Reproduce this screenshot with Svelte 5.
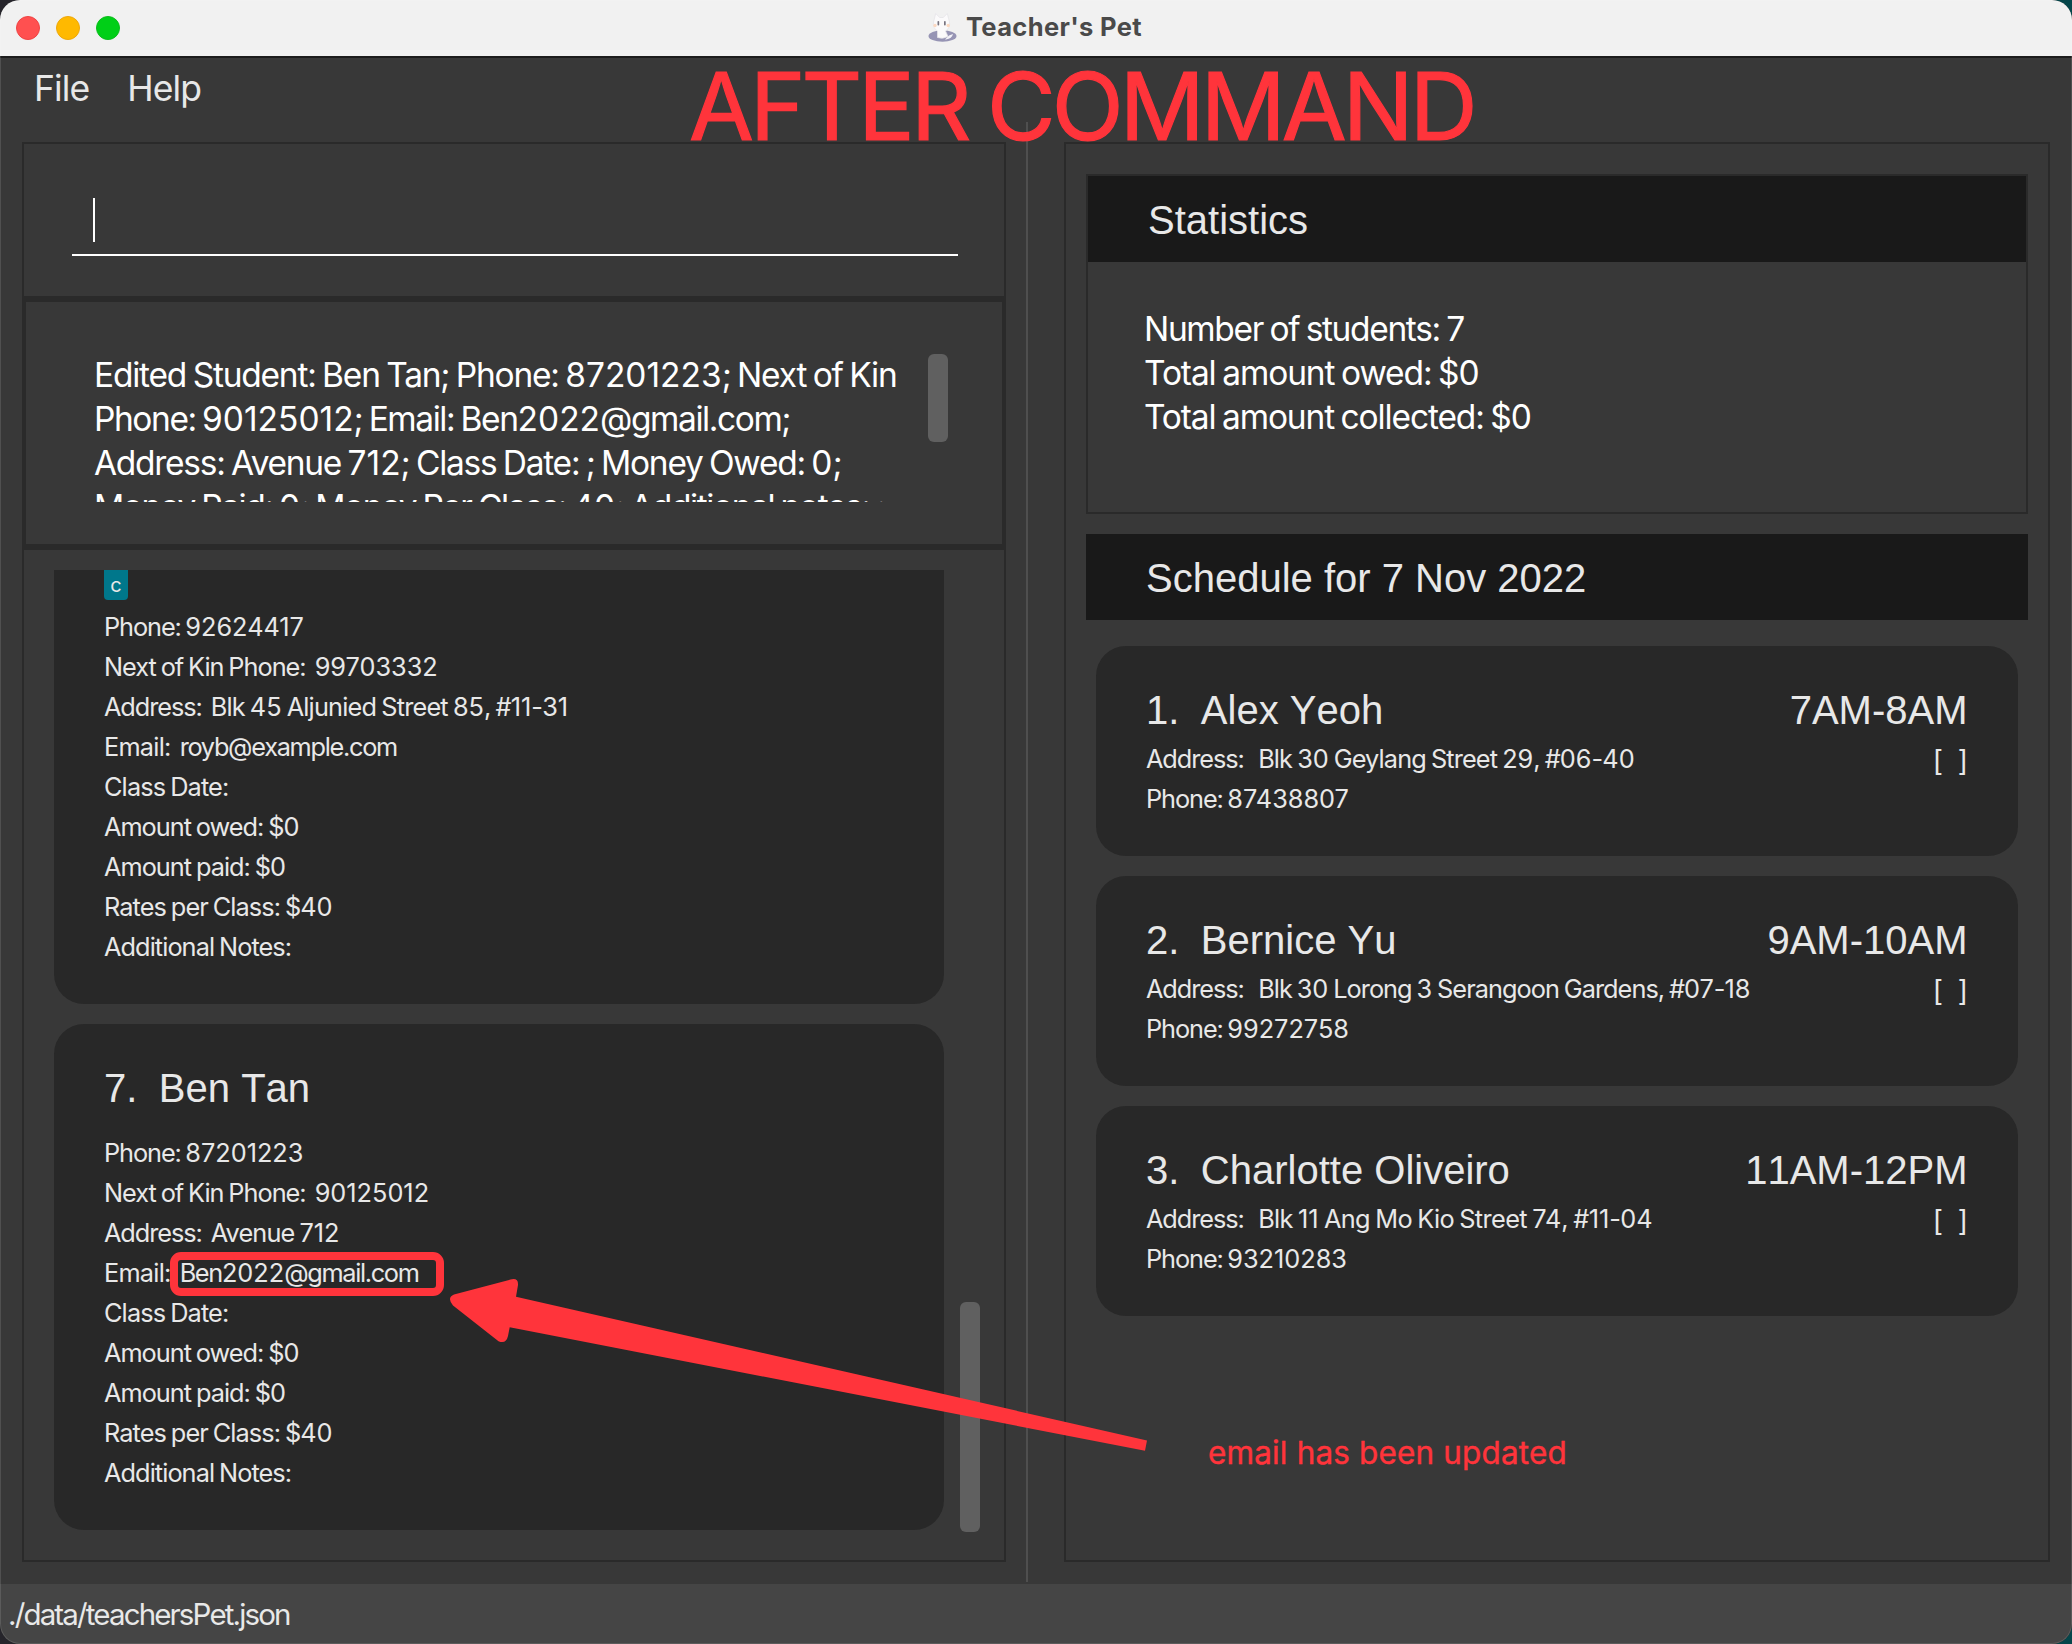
<script>
  const resultLines = [
    { text: 'Edited Student: Ben Tan; Phone: 87201223; Next of Kin', track: -1.22 },
    { text: 'Phone: 90125012; Email: Ben2022@gmail.com;', track: -1.42 },
    { text: 'Address: Avenue 712; Class Date: ; Money Owed: 0;', track: -1.27 },
    { text: 'Money Paid: 0; Money Per Class: 40; Additional notes: ;', track: -1.4 },
  ];

  const stats = [
    { text: 'Number of students: 7', track: -1.34 },
    { text: 'Total amount owed: $0', track: -1.11 },
    { text: 'Total amount collected: $0', track: -1.14 },
  ];

  const students = [
    {
      tag: 'c',
      clipped: true,
      phone: { text: '92624417', track: 0 },
      kin: { text: '99703332', track: 0 },
      address: { text: 'Blk 45 Aljunied Street 85, #11-31', track: -0.8 },
      email: { text: 'royb@example.com', track: -1.28 },
    },
    {
      index: 7,
      name: 'Ben Tan',
      phone: { text: '87201223', track: 0 },
      kin: { text: '90125012', track: 0 },
      address: { text: 'Avenue 712', track: -0.85 },
      email: { text: 'Ben2022@gmail.com', track: -1.33 },
    },
  ];

  const lessons = [
    { index: 1, name: 'Alex Yeoh', time: '7AM-8AM', phone: { text: '87438807', track: 0 }, address: { text: 'Blk 30 Geylang Street 29, #06-40', track: -0.86 } },
    { index: 2, name: 'Bernice Yu', time: '9AM-10AM', phone: { text: '99272758', track: 0 }, address: { text: 'Blk 30 Lorong 3 Serangoon Gardens, #07-18', track: -0.96 } },
    { index: 3, name: 'Charlotte Oliveiro', time: '11AM-12PM', phone: { text: '93210283', track: 0 }, address: { text: 'Blk 11 Ang Mo Kio Street 74, #11-04', track: -0.62 } },
  ];

  // Letters are tracked tightly while runs of digits keep their natural width.
  const runs = (text) => text.split(/(\d+)/).filter(Boolean);
  const isDigits = (run) => /^\d/.test(run);
</script>

{#snippet tracked(text, track)}
  <span class="tracked" style:letter-spacing="{track}px">{#each runs(text) as run}<span class:digits={isDigits(run)}>{run}</span>{/each}</span>
{/snippet}

{#snippet field(label, value, track = -1.08)}
  <div class="row">
    {@render tracked(label, track)}
    {#if value}{@render tracked(value.text, value.track)}{/if}
  </div>
{/snippet}

<div class="window">
  <header class="titlebar">
    <div class="lights">
      <i class="close"></i><i class="minimise"></i><i class="zoom"></i>
    </div>
    <div class="title">
      <svg width="30" height="30" viewBox="0 0 30 30" aria-hidden="true">
        <ellipse cx="14.500" cy="23" rx="14" ry="5.800" fill="#9694b4" />
        <path d="M18 26.500q6-1 7-5.500l-4 1.500-4 4z" fill="#f4f3f8" />
        <path d="M9.500 24.500V18q-5-3-4-9l2.200-8.500 4 4h3.600l4-4L21.500 9q1 6-4 9l2.500 5.500q-5.500 3-10.500 1z" fill="#fbfafb" stroke="#e6e4e8" stroke-width=".8" />
        <rect x="9.500" y="8" width="1.700" height="4.500" rx=".8" fill="#77737f" />
        <rect x="16" y="8" width="1.700" height="4.500" rx=".8" fill="#77737f" />
        <circle cx="7" cy="12.500" r="1.700" fill="#fbd9c2" />
        <circle cx="20.200" cy="12.500" r="1.700" fill="#fbd9c2" />
      </svg>
      <span>Teacher's Pet</span>
    </div>
  </header>

  <nav class="menu"><span>File</span><span>Help</span></nav>

  <main>
    <section class="panel left">
      <div class="command"><div class="input"><i class="caret"></i></div></div>

      <div class="result">
        <div class="result-text">
          {#each resultLines as line}
            <div>{@render tracked(line.text, line.track)}</div>
          {/each}
        </div>
        <i class="thumb short"></i>
      </div>

      <div class="list">
        <div class="cards">
          {#each students as s}
            <article class="card" class:clipped={s.clipped}>
              {#if s.tag}<span class="tag">{s.tag}</span>{/if}
              {#if s.name}<h3><span>{s.index}.</span><span>{s.name}</span></h3>{/if}
              <div class="details">
                <div class="tight">{@render field('Phone:', s.phone)}</div>
                {@render field('Next of Kin Phone:', s.kin, -1)}
                {@render field('Address:', s.address)}
                {@render field('Email:', s.email, -0.75)}
                {@render field('Class Date:', null, -0.86)}
                {@render field('Amount owed: $0', null, -1)}
                {@render field('Amount paid: $0', null, -0.98)}
                {@render field('Rates per Class: $40', null, -0.92)}
                {@render field('Additional Notes:', null, -0.93)}
              </div>
            </article>
          {/each}
        </div>
        <i class="thumb long"></i>
      </div>
    </section>

    <div class="splitter"></div>

    <section class="panel right">
      <div class="stats">
        <h2>Statistics</h2>
        <div class="stats-text">
          {#each stats as line}
            <div>{@render tracked(line.text, line.track)}</div>
          {/each}
        </div>
      </div>

      <h2>Schedule for 7 Nov 2022</h2>

      <div class="lessons">
        {#each lessons as l}
          <article class="card lesson">
            <div class="head">
              <h3><span>{l.index}.</span><span>{l.name}</span></h3>
              <span class="time">{l.time}</span>
            </div>
            <div class="body">
              <div class="details">
                <div class="wide">{@render field('Address:', l.address)}</div>
                <div class="tight">{@render field('Phone:', l.phone)}</div>
              </div>
              <span class="check">[ ]</span>
            </div>
          </article>
        {/each}
      </div>
    </section>
  </main>

  <footer>./data/teachersPet.json</footer>

  <svg class="marks" viewBox="0 0 2072 1644" aria-hidden="true">
    <rect x="174" y="1256" width="266" height="36" rx="7" fill="none" stroke="#ff343b" stroke-width="8" />
    <path
      d="M454 1294.500L510.500 1279.500Q518.500 1277.500 518 1285L516 1296.700L1147 1440.500L1145 1450.800L509.700 1327.300L508 1336Q506 1344.500 498.500 1341.200L453 1305.500Q446.500 1297.500 454 1294.500Z"
      fill="#ff343b"
    />
  </svg>
  <div class="headline">AFTER COMMAND</div>
  <div class="caption">email has been updated</div>
</div>

<style>
  :global(body) {
    margin: 0;
    background: linear-gradient(90deg, #26252b 50%, #05464b 50%);
  }
  .window {
    position: relative;
    display: flex;
    flex-direction: column;
    width: 2072px;
    height: 1644px;
    overflow: hidden;
    border-radius: 20px;
    background: #383838;
    color: #e8e8e8;
    font-family: Inter, sans-serif;
  }
  .window::after {
    content: '';
    position: absolute;
    inset: 0;
    border-radius: 20px;
    box-shadow: inset 0 0 0 1px rgba(255, 255, 255, 0.12);
    pointer-events: none;
  }
  h2, h3 {
    margin: 0;
    font: 400 40px/44px 'Liberation Sans', Arial, sans-serif;
    white-space: nowrap;
  }

  .titlebar {
    box-sizing: border-box;
    display: grid;
    grid-template-columns: 1fr auto 1fr;
    align-items: center;
    height: 58px;
    flex: none;
    border-bottom: 2px solid #1c1c1c;
    background: #f1f1f1;
    color: #4a4a4a;
  }
  .lights {
    display: flex;
    gap: 16px;
    padding-left: 16px;
  }
  .lights i {
    box-sizing: border-box;
    width: 24px;
    height: 24px;
    border-radius: 50%;
  }
  .close { background: #ff5050; border: 1px solid #ee4444; }
  .minimise { background: #ffb900; border: 1px solid #eda70b; }
  .zoom { background: #00cf17; border: 1px solid #0bbd1c; }
  .title {
    display: flex;
    align-items: center;
    gap: 8px;
    font: 700 25.5px/32px Inter, sans-serif;
    letter-spacing: 0.36px;
  }
  .title svg { margin-left: -2px; margin-top: -1px; }
  .title span { margin-top: -3px; }

  .menu {
    display: flex;
    flex: none;
    gap: 38px;
    box-sizing: border-box;
    height: 64px;
    padding: 9px 0 0 34px;
    font-size: 35.5px;
    line-height: 44px;
    letter-spacing: -0.9px;
  }

  main {
    display: flex;
    flex: 1;
    min-height: 0;
  }
  .panel {
    box-sizing: border-box;
    display: flex;
    flex-direction: column;
    margin: 20px 0 22px;
    border: 2px solid #2a2a2a;
  }
  .left { width: 984px; margin-left: 22px; }
  .right { width: 986px; padding: 30px 20px 0; }
  .splitter {
    width: 2px;
    margin: 0 36px 2px 20px;
    background: #4f4f4f;
  }

  .command {
    box-sizing: border-box;
    height: 152px;
    padding: 54px 46px 0 48px;
  }
  .input {
    height: 56px;
    padding-left: 21px;
    border-bottom: 2px solid #fff;
  }
  .caret {
    display: block;
    width: 2px;
    height: 44px;
    background: #fff;
  }

  .result {
    box-sizing: border-box;
    display: flex;
    justify-content: space-between;
    height: 254px;
    padding: 51px 54px 42px 68px;
    border: solid #2a2a2a;
    border-width: 6px 2px;
  }
  .result-text, .stats-text {
    color: #fff;
    font-size: 33.5px;
    line-height: 44px;
    white-space: pre;
  }
  .result-text { overflow: hidden; width: 820px; }
  .tracked { word-spacing: -0.05em; }
  .digits { letter-spacing: 0; }
  .thumb {
    flex: none;
    width: 20px;
    border-radius: 6px;
    background: #606060;
  }
  .short { height: 88px; margin-top: 1px; }
  .long { height: 230px; align-self: flex-end; margin-bottom: -2px; }

  .list {
    display: flex;
    gap: 16px;
    padding: 20px 24px 30px 30px;
  }
  .cards {
    display: flex;
    flex-direction: column;
    gap: 20px;
    width: 890px;
  }
  .card {
    box-sizing: border-box;
    display: flex;
    flex-direction: column;
    padding: 42px 50px 37.5px;
    border-radius: 30px;
    background: #282828;
  }
  .card.clipped { padding-top: 0; border-radius: 0 0 30px 30px; }
  .card h3 {
    display: flex;
    gap: 21.5px;
  }
  .card h3, .time, h2 { font-kerning: none; }
  .details { padding-top: 22.5px; }
  .clipped .details, .lesson .details { padding-top: 6.5px; }
  .tag {
    width: 24px;
    height: 30px;
    border-radius: 0 0 4px 4px;
    background: #00778b;
    font-size: 20px;
    line-height: 31px;
    text-align: center;
  }
  .row {
    display: flex;
    gap: 9px;
    height: 40px;
    font-size: 25.3px;
    line-height: 40px;
    white-space: nowrap;
  }
  .tight .row { gap: 4.5px; }
  .wide .row { gap: 14.5px; }

  .stats {
    box-sizing: border-box;
    height: 340px;
    margin-bottom: 20px;
    border: 2px solid #2a2a2a;
  }
  h2 {
    box-sizing: border-box;
    height: 86px;
    padding: 22px 60px;
    background: #191919;
  }
  .stats-text { padding: 45px 56px; }

  .lessons {
    display: flex;
    flex-direction: column;
    gap: 20px;
    padding: 26px 10px;
  }
  .head, .body {
    display: flex;
    justify-content: space-between;
  }
  .time {
    margin-right: 0.5px;
    font-family: 'Liberation Sans', Arial, sans-serif;
    font-size: 40px;
    line-height: 44px;
  }
  .check {
    padding: 9px 0 0;
    font-size: 28px;
    line-height: 40px;
    word-spacing: 7px;
  }

  footer {
    flex: none;
    height: 60px;
    padding-left: 8px;
    background: #454545;
    font-size: 29.5px;
    line-height: 60px;
    letter-spacing: -1.85px;
  }

  /* Annotations drawn over the window */
  .marks {
    position: absolute;
    inset: 0;
    width: 2072px;
    height: 1644px;
  }
  .headline, .caption {
    position: absolute;
    color: #ff343b;
    white-space: nowrap;
  }
  .headline {
    left: 689px;
    top: 49px;
    font-size: 94px;
    line-height: 114px;
    letter-spacing: -3.9px;
    word-spacing: -3px;
    -webkit-text-stroke: 1.2px #ff343b;
  }
  .caption {
    left: 1208px;
    top: 1433px;
    font-size: 31.5px;
    line-height: 40px;
    letter-spacing: 0.15px;
    -webkit-text-stroke: 0.4px #ff343b;
  }
</style>
